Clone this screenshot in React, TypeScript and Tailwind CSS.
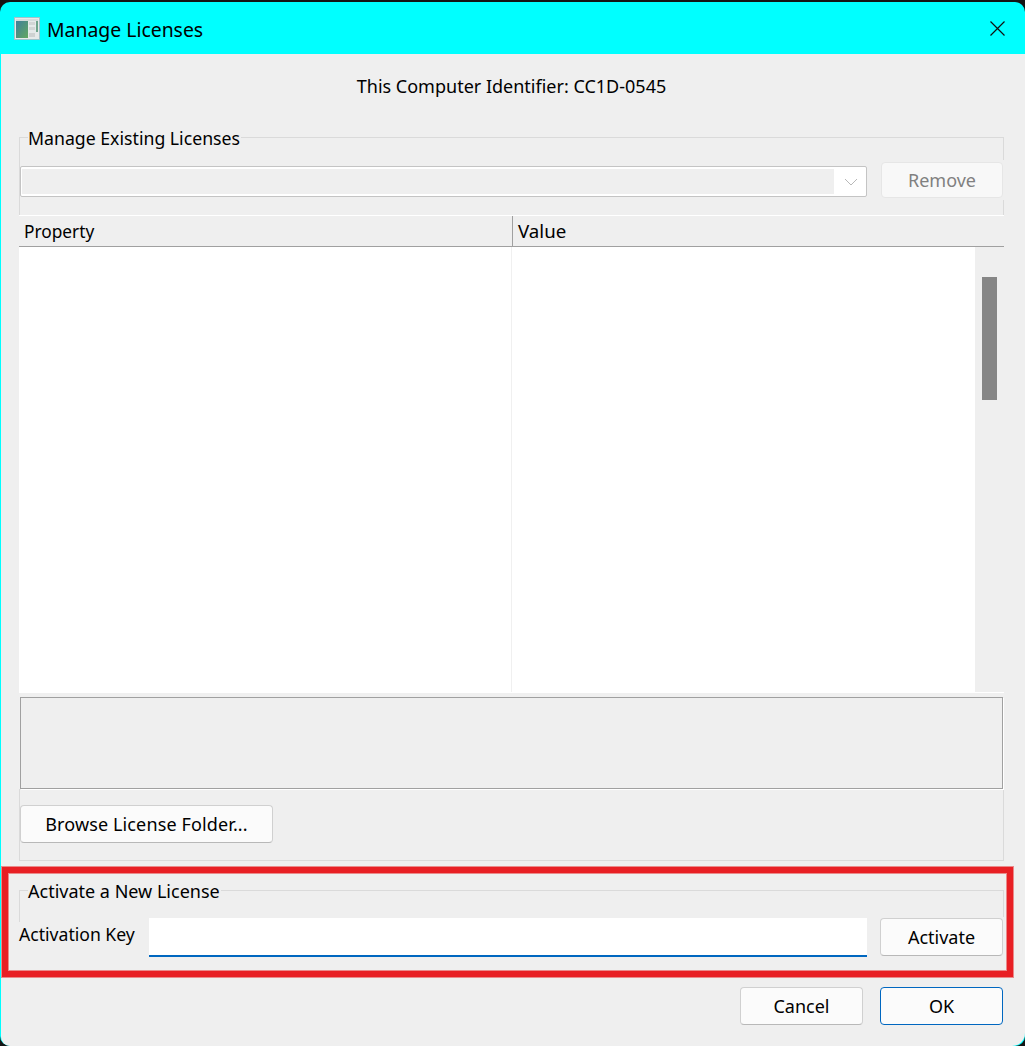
const btn = 'flex items-center justify-center rounded-[4px] border border-[#d0d0d0] border-b-[#b8b8b8] bg-[#fbfbfb] text-black';

function WindowIcon() {
  return (
    <svg width="26" height="23" viewBox="0 0 26 23" className="shrink-0">
      <defs>
        <linearGradient id="pane" x1="0" y1="0" x2="1" y2="1">
          <stop offset="0" stopColor="#3f7f9c" />
          <stop offset="1" stopColor="#62a860" />
        </linearGradient>
      </defs>
      <rect x="0.5" y="0.5" width="25" height="22" fill="#e6eaea" stroke="#9fc4cc" />
      <rect x="2" y="4" width="12" height="17" fill="url(#pane)" />
      <rect x="2" y="2" width="22" height="2" fill="#d4dcdc" />
      <rect x="15" y="5" width="6" height="3" fill="#d2d6d6" />
      <rect x="15" y="10" width="6" height="3" fill="#d2d6d6" />
      <rect x="15" y="16" width="6" height="4" fill="#cfd2d2" />
      <rect x="22" y="4" width="2" height="11" fill="#6fa58c" />
    </svg>
  );
}

export default function App() {
  return (
    <div className="h-[1046px] w-[1025px] overflow-hidden bg-[#141414] pt-[2px] font-['Noto_Sans',sans-serif] text-[18px] text-black">
      <div className="flex h-[1044px] w-[1025px] flex-col rounded-[10px] bg-[#00ffff] pl-px">
        {/* Title bar */}
        <header className="flex h-[52px] shrink-0 items-center pl-[13px] pr-[20px]">
          <WindowIcon />
          <span className="ml-[7px] pt-[3px] text-[19.4px]">Manage Licenses</span>
          <svg width="15" height="15" viewBox="0 0 15 15" className="ml-auto" fill="none" stroke="#111" strokeWidth="1.2">
            <path d="M0.5 0.5 L14.5 14.5 M14.5 0.5 L0.5 14.5" />
          </svg>
        </header>

        <main className="flex flex-1 flex-col rounded-bl-[9px] rounded-br-[13px] bg-[#efefef]">
          <p className="ml-[18px] mt-[19px] w-[985px] text-center leading-[26px]">This Computer Identifier: CC1D-0545</p>

          {/* Existing licenses */}
          <fieldset className="ml-[18px] mt-[25px] w-[985px] border border-[#dadada]">
            <legend className="ml-[8px] pr-px pt-[2px] text-[17.7px] leading-[24px]">Manage Existing Licenses</legend>
            <div className="mt-[10px] flex">
              <div className="mt-[6px] flex h-[31px] w-[847px] items-center rounded-[2px] border border-[#c4c4c4] bg-white pl-px">
                <div className="h-[25px] w-[812px] bg-[#efefef]" />
                <svg width="14" height="8" viewBox="0 0 14 8" className="ml-[10px]" fill="none" stroke="#b8b8b8">
                  <path d="M1 1 L7 7 L13 1" />
                </svg>
              </div>
              <div className="ml-[13px] -mr-px bg-[#efefef] py-[2px] pl-px pr-px">
                <div className="flex h-[36px] w-[122px] items-center justify-center rounded-[4px] border border-[#e6e6e6] bg-[#f8f8f8] text-[#808080]">Remove</div>
              </div>
            </div>

            {/* Property table */}
            <div className="-mx-px mt-[15px] flex h-[32px] w-[985px] border-t border-b border-t-white border-b-[#a0a0a0] bg-[#efefef]">
              <div className="w-[494px] border-r border-[#a0a0a0] pl-[5px] text-[17.3px] leading-[31px]">Property</div>
              <div className="pl-[5px] text-[18.7px] leading-[30px]">Value</div>
            </div>
            <div className="-mx-px flex h-[445px] w-[985px] bg-[#efefef]">
              <div className="flex w-[956px] bg-white">
                <div className="w-[493px] border-r border-[#f0f0f0]" />
              </div>
              <div className="w-[29px] pl-[7px] pt-[30px]">
                <div className="h-[123px] w-[15px] bg-[#868686]" />
              </div>
            </div>

            <div className="-mx-px w-[985px] border-t border-white bg-[#f0f0f0] pl-px pt-[4px]">
              <div className="h-[92px] w-[983px] border border-[#a0a0a0] bg-[#efefef] shadow-[1px_1px_0_#fff]" />
            </div>

            <div className={`${btn} mt-[16px] h-[38px] w-[253px] tracking-[0.13px]`}>Browse License Folder...</div>
            <div className="h-[17px]" />
          </fieldset>

          {/* Annotated section */}
          <section className="ml-px mt-[6px] h-[110px] w-[1011px] border-[6px] border-[#e81f24] pl-[11px] shadow-[0_0_0_1px_#ea8a8a,inset_0_0_0_1px_#ea8a8a]">
            <fieldset className="mt-[4px] w-[985px] border border-b-0 border-[#dadada]">
              <legend className="ml-[8px] pr-px pt-[2px] leading-[24px]">Activate a New License</legend>
              <div className="mt-[14px] flex items-start">
                <div className="-ml-px mt-[5px] h-[35px] w-[130px] bg-[#efefef] text-[17.6px] leading-[24px]">Activation Key</div>
                <div className="mt-px h-[39px] w-[718px] border-b-2 border-[#0067c0] bg-white" />
                <div className="-mr-px ml-[12px] bg-[#efefef] py-px pl-px pr-px">
                  <div className={`${btn} h-[38px] w-[123px]`}>Activate</div>
                </div>
              </div>
            </fieldset>
          </section>

          <footer className="ml-[739px] mt-[10px] flex gap-[17px]">
            <div className={`${btn} h-[38px] w-[123px]`}>Cancel</div>
            <div className="flex h-[38px] w-[123px] items-center justify-center rounded-[4px] border border-[#0067c0] bg-[#fbfbfb]">OK</div>
          </footer>
        </main>
      </div>
    </div>
  );
}
